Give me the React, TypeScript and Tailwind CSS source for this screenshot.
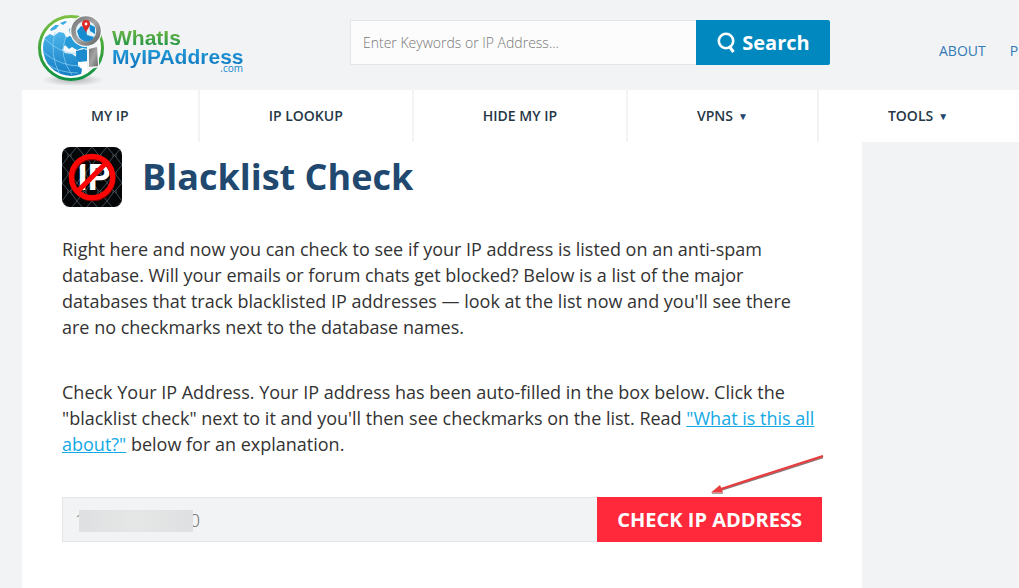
import { useState, type FormEvent } from "react";

const navItems = [
  { label: "MY IP", menu: false },
  { label: "IP LOOKUP", menu: false },
  { label: "HIDE MY IP", menu: false },
  { label: "VPNS", menu: true },
  { label: "TOOLS", menu: true },
];

function GlobeLogo() {
  return (
    <svg width="72" height="76" viewBox="0 0 72 76" className="shrink-0" aria-hidden="true">
      <defs>
        <linearGradient id="ring" x1="0" y1="0" x2="0" y2="1">
          <stop offset="0" stopColor="#7cc043" />
          <stop offset="0.6" stopColor="#35a03c" />
          <stop offset="1" stopColor="#0f9347" />
        </linearGradient>
        <linearGradient id="sea" x1="0" y1="0" x2="0" y2="1">
          <stop offset="0" stopColor="#4db5ea" />
          <stop offset="1" stopColor="#0872bd" />
        </linearGradient>
        <linearGradient id="steel" x1="0" y1="0" x2="1" y2="1">
          <stop offset="0" stopColor="#777" />
          <stop offset="0.5" stopColor="#a5a5a5" />
          <stop offset="1" stopColor="#666" />
        </linearGradient>
        <radialGradient id="shade">
          <stop offset="0" stopColor="#999" stopOpacity="0.7" />
          <stop offset="1" stopColor="#999" stopOpacity="0" />
        </radialGradient>
        <clipPath id="globe">
          <circle cx="33" cy="36" r="28" />
        </clipPath>
      </defs>
      <ellipse cx="35" cy="68" rx="31" ry="6" fill="url(#shade)" />
      <circle cx="33" cy="36" r="31.5" fill="#fff" stroke="url(#ring)" strokeWidth="3" />
      <g clipPath="url(#globe)">
        <rect x="4" y="7" width="60" height="58" fill="#f5f9fc" />
        <path
          d="M3 33l3-7 6-4 4 2 5-4 5 1 2 4 5 1-1 4-5 3-3 5 3 3 7 1 6 4 5 6 1 6-4 5-3 9H14L3 50z"
          fill="url(#sea)"
        />
        <path d="M12 17l5-4 4 0-3 4-5 2zM22 11l5-2 2 1-4 3zM31 17l5-3 5 1 0 6-4-1-5 2z" fill="#3eaae3" />
        <path d="M27 28l4-4 5 1 1 4 4 3 6 0 4 2-1 3-6-1-5 2-5-3-3 2-4-4z" fill="#259bd9" />
        <path d="M40 50l5-5 8-2 8-4-1 18-9 8-8-2 1-6-4-3z" fill="#fff" />
        <path d="M38 39l8-2 8 3 3 5-6 4-10 1-3-5z" fill="#1c8bce" />
        <path
          d="M7 27q14 14 32 15M5 40q17 14 37 14M9 52q13 9 31 9M17 20q-6 22 5 43M28 24q-8 20 6 39"
          fill="none"
          stroke="#91d2f3"
          strokeWidth="0.7"
        />
      </g>
      <circle cx="48" cy="19" r="16" fill="#f6f8fa" />
      <circle cx="48" cy="19" r="12.5" fill="#e5f3fb" stroke="url(#steel)" strokeWidth="4.500" />
      <path d="M39 19l4-5 5 2 1 7 7 2-2 3q-8 4-13-3zM51 12l6 3 0 7-5-3z" fill="#168bd0" />
      <path d="M48 21c-1-4-4-6-4-9a4 4 0 0 1 8 0c0 3-3 5-4 9z" fill="#df2726" />
      <circle cx="48" cy="12" r="1.400" fill="#fff" />
      <path d="M49 35l12-2v22l-12 3z" fill="#f4f6f8" />
      <path d="M51 37l8-2 1 19-9 1z" fill="url(#steel)" />
    </svg>
  );
}

function BlockedIpIcon() {
  return (
    <svg width="60" height="60" viewBox="0 0 60 60" className="shrink-0" aria-hidden="true">
      <defs>
        <pattern id="fence" width="15" height="18" patternUnits="userSpaceOnUse">
          <path d="M0 0l6 7v3l-6 8M15 0l-6 7v3l6 8M6 7l3 3M9 7l-3 3" fill="none" stroke="#46515b" strokeWidth="0.9" />
        </pattern>
      </defs>
      <rect width="60" height="60" rx="8" fill="#050607" />
      <rect width="60" height="60" rx="8" fill="url(#fence)" />
      <text
        x="32"
        y="43"
        textAnchor="middle"
        fontSize="36"
        fontWeight="700"
        fontFamily="Liberation Sans Narrow, Roboto, sans-serif"
        fill="#fff"
      >
        IP
      </text>
      <circle cx="30.5" cy="31" r="20.5" fill="none" stroke="#8d0000" strokeWidth="5.5" />
      <g fill="none" stroke="#fb0505" strokeWidth="5.2">
        <circle cx="30" cy="30" r="20.7" />
        <path d="M15.5 44.5l29-29" />
      </g>
    </svg>
  );
}

export default function App() {
  const [keywords, setKeywords] = useState("");
  const [ip, setIp] = useState("1" + "\u2007".repeat(10) + "\u200a" + "0");

  const onSubmit = (e: FormEvent) => e.preventDefault();

  return (
    <div className="min-h-screen overflow-x-hidden bg-[#f1f3f5] font-['Open_Sans',sans-serif] text-[#333]">
      <header className="flex h-[90px] items-start">
        <a href="#home" className="flex w-[350px] shrink-0 gap-0.5 pl-[38px] pt-3">
          <GlobeLogo />
          <span className="flex w-[131px] flex-col pt-4 font-['Liberation_Sans',sans-serif] text-[21px] font-bold leading-[19px]">
            <span className="bg-linear-to-b from-[#6fb93f] to-[#169447] bg-clip-text text-transparent">WhatIs</span>
            <span className="bg-linear-to-b from-[#27a0dc] to-[#0870ba] bg-clip-text pb-1 text-transparent">MyIPAddress</span>
            <span className="-mt-2 text-right font-['Open_Sans',sans-serif] text-[10px] font-normal leading-3 text-[#1686c9]">.com</span>
          </span>
        </a>
        <form onSubmit={onSubmit} className="mt-5 flex h-[45px] w-[480px] shrink-0">
          <input
            type="text"
            aria-label="Search"
            placeholder="Enter Keywords or IP Address..."
            value={keywords}
            onChange={(e) => setKeywords(e.target.value)}
            className="min-w-0 flex-1 border border-r-0 border-[#e3e5e8] bg-[#fcfcfc] px-3 text-sm font-light outline-none placeholder:text-[#777]"
          />
          <button
            type="submit"
            className="flex w-[134px] items-center justify-center gap-1 rounded-r-xs bg-[#0088bf] text-xl font-bold text-white"
          >
            <svg width="22" height="22" viewBox="0 0 22 22" fill="none" stroke="currentColor" aria-hidden="true">
              <circle cx="10" cy="9" r="7.2" strokeWidth="2.6" />
              <path d="M13 14l4.5 6" strokeWidth="3" />
            </svg>
            Search
          </button>
        </form>
        <div className="ml-[109px] mt-10 flex gap-6 whitespace-nowrap text-sm font-medium leading-[22px] text-[#337ab7]">
          <a href="#about">ABOUT</a>
          <a href="#press">PRESS</a>
        </div>
      </header>

      <nav className="ml-[22px] flex h-[52px] bg-white text-sm font-semibold text-[#263746]">
        {navItems.map((item) => (
          <a
            key={item.label}
            href="#menu"
            className="flex shrink-0 items-center gap-[5px] whitespace-nowrap border-r-2 border-[#f1f3f5] px-[69px] last:border-r-0"
          >
            {item.label}
            {item.menu && <span className="text-[10px] text-[#1f4670]">▼</span>}
          </a>
        ))}
      </nav>

      <main className="ml-[22px] min-h-[calc(100vh-142px)] max-w-[840px] bg-white px-10 pb-10 pt-[5px]">
        <div className="flex items-center gap-5">
          <BlockedIpIcon />
          <h1 className="text-4xl font-bold text-[#21486f]">Blacklist Check</h1>
        </div>
        <p className="mt-[29px] text-lg leading-[26px]">
          Right here and now you can check to see if your IP address is listed on an anti-spam database. Will your
          emails or forum chats get blocked? Below is a list of the major databases that track blacklisted IP
          addresses — look at the list now and you'll see there are no checkmarks next to the database names.
        </p>
        <p className="mt-[39px] text-lg leading-[26px]">
          Check Your IP Address. Your IP address has been auto-filled in the box below. Click the "blacklist check"
          next to it and you'll then see checkmarks on the list. Read{" "}
          <a href="#explain" className="text-[#12a9e6] underline">
            "What is this all about?"
          </a>{" "}
          below for an explanation.
        </p>
        <form onSubmit={onSubmit} className="relative mt-10 flex h-[45px]">
          <input
            type="text"
            aria-label="IP address"
            value={ip}
            onChange={(e) => setIp(e.target.value)}
            className="min-w-0 flex-1 border border-r-0 border-[#e3e5e7] bg-[#f1f3f5] px-3 text-lg font-light text-[#666] outline-none"
          />
          <button type="submit" className="bg-[#ff293b] px-5 text-xl font-bold text-white">
            CHECK IP ADDRESS
          </button>
          {/* covers the middle digits of the address */}
          <span className="pointer-events-none absolute left-[17px] top-[13px] h-[22px] w-[114px] bg-linear-to-r from-[#dfe0e1] via-[#e5e6e6] to-[#dfe0e1]" />
          <svg
            width="114"
            height="42"
            viewBox="0 0 114 42"
            className="pointer-events-none absolute -right-0.5 bottom-[45px]"
            aria-hidden="true"
          >
            <path d="M113 2.500L10 35.500" stroke="#8b7777" strokeWidth="1.6" />
            <path d="M2 38.200h11" stroke="#8b7777" strokeWidth="1" />
            <path d="M113 1L10 34.200" stroke="#e93c3e" strokeWidth="2.200" />
            <path d="M1 37.500l9-7.500 3 7.500z" fill="#e93c3e" />
          </svg>
        </form>
      </main>
    </div>
  );
}
